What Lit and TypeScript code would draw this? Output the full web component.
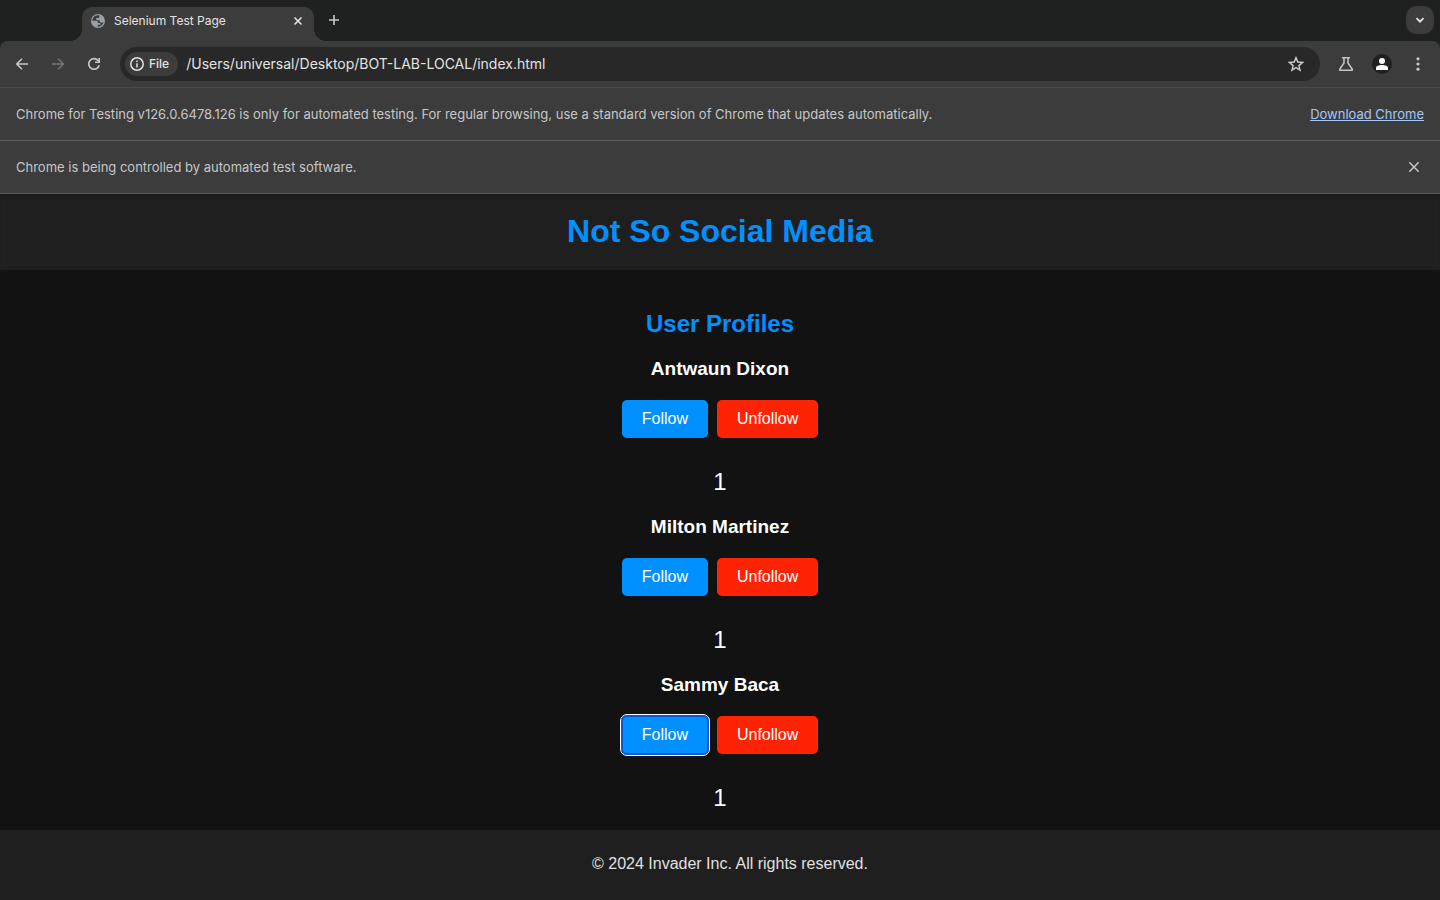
import { LitElement, html, css, svg } from "lit";
import { customElement, property, state } from "lit/decorators.js";

const icon = (size: number, box: string, body: unknown) =>
  html`<svg width=${size} height=${size} viewBox=${box} aria-hidden="true">${body}</svg>`;

const icons = {
  globe: icon(14, "0 0 14 14", svg`<circle cx="7" cy="7" r="7" fill="#9aa0a6"/><path d="M8.300 1.500C5.500.9 2.900 2.200 1.800 4.500c-.4.800-.5 1.600-.5 2.300h3.500c1.500 0 2.400.8 2.400 1.900v.3h1.200c.7 0 1.100.4 1.100 1v.8H6.700v1.900c2.900.2 5.400-1.800 5.900-4.600-.6.500-1.200.7-1.900.7-1.300 0-2-.7-2-1.700V6.300H6.200c-.7 0-1.200-.5-1.200-1.200s.5-1.200 1.200-1.200h2.100z" fill="#3c3c3c"/>`),
  close: icon(16, "0 0 16 16", svg`<path d="M4.500 4.500l7 7M11.500 4.500l-7 7" stroke="#e3e3e3" stroke-width="1.600"/>`),
  closeLarge: icon(16, "0 0 16 16", svg`<path d="M3.300 3.300l9.400 9.400M12.700 3.300l-9.400 9.400" stroke="#c7c7c7" stroke-width="1.500"/>`),
  plus: icon(16, "0 0 16 16", svg`<path d="M8 3v10M3 8h10" stroke="#c7c7c7" stroke-width="1.600"/>`),
  chevron: icon(16, "0 0 16 16", svg`<path d="M4.500 6.200L8 9.700l3.500-3.500" fill="none" stroke="#e3e3e3" stroke-width="1.800"/>`),
  back: icon(16, "0 0 16 16", svg`<path d="M14 8H3M8 2.700L2.700 8 8 13.300" fill="none" stroke="#c7c7c7" stroke-width="1.600"/>`),
  forward: icon(16, "0 0 16 16", svg`<path d="M2 8h11M8 2.700L13.300 8 8 13.300" fill="none" stroke="#757575" stroke-width="1.600"/>`),
  reload: icon(16, "0 0 16 16", svg`<path d="M13.200 9.200A5.300 5.300 0 1 1 12 4.400L13.300 5.700" fill="none" stroke="#c7c7c7" stroke-width="1.600"/><path d="M14 2v5H9V5.400h3.400V2z" fill="#c7c7c7"/>`),
  info: icon(14, "0 0 14 14", svg`<circle cx="7" cy="7" r="6.200" fill="none" stroke="#e3e3e3" stroke-width="1.500"/><path d="M7 6.200v4.200M7 3.500v1.500" stroke="#e3e3e3" stroke-width="1.500"/>`),
  star: icon(16, "0 0 16 16", svg`<path d="M8 1.800l1.800 4.300 4.700.4-3.600 3.100 1.100 4.500L8 11.700l-4 2.400 1.100-4.500L1.500 6.500l4.700-.4z" fill="none" stroke="#c7c7c7" stroke-width="1.500"/>`),
  flask: icon(16, "0 0 16 16", svg`<path d="M4 1.700h8M6 2v5L1.800 13.200q-.5 1.100.6 1.100h11.200q1.100 0 .6-1.100L10 7V2" fill="none" stroke="#c7c7c7" stroke-width="1.500"/>`),
  person: icon(20, "0 0 20 20", svg`<circle cx="10" cy="10" r="10" fill="#1f2120"/><circle cx="10" cy="7" r="3" fill="#fff"/><path d="M4 16v-2.200c0-1.900 3.200-2.800 6-2.800s6 .9 6 2.800V16z" fill="#fff"/>`),
  dots: icon(16, "0 0 16 16", svg`<g fill="#c7c7c7"><circle cx="8" cy="2.800" r="1.600"/><circle cx="8" cy="8" r="1.600"/><circle cx="8" cy="13.200" r="1.600"/></g>`),
};

@customElement("browser-chrome")
class BrowserChrome extends LitElement {
  static styles = css`
    :host { display: block; font-family: Inter, "Noto Sans", sans-serif; color: #e3e3e3; background: #1f2120; text-align: left; }
    button { display: flex; align-items: center; justify-content: center; padding: 0; border: 0; background: none; color: inherit; font: inherit; }
    svg { display: block; flex: none; }
    .tabs { display: flex; align-items: center; height: 40px; padding: 0 6px 1px 82px; }
    .tab { position: relative; display: flex; align-items: center; align-self: flex-end; gap: 9px; box-sizing: border-box; width: 232px; height: 34px; margin-bottom: -1px; padding: 0 8px 6px 9px; border-radius: 10px 10px 0 0; background: #3c3c3c; font-size: 12px; }
    .tab::before, .tab::after { content: ""; position: absolute; bottom: 0; width: 12px; height: 12px; }
    .tab::before { right: 100%; background: radial-gradient(circle at 0 0, transparent 12px, #3c3c3c 12px); }
    .tab::after { left: 100%; background: radial-gradient(circle at 100% 0, transparent 12px, #3c3c3c 12px); }
    .title { flex: 1; line-height: 14px; }
    .new { margin-left: 12px; }
    .search { width: 28px; height: 28px; margin-left: auto; border-radius: 10px; background: #3c3c3c; }
    .toolbar { display: flex; align-items: center; gap: 20px; height: 46px; padding: 0 14px; border-bottom: 1px solid #4a4a4a; border-radius: 8px 8px 0 0; background: #3c3c3c; }
    .address { display: flex; flex: 1; align-items: center; gap: 8px; height: 34px; margin: 0 -2px; padding: 0 16px 0 5px; border-radius: 17px; background: #282828; }
    .chip { gap: 5px; height: 24px; padding: 0 9px 0 5px; border-radius: 12px; background: #3c3c3c; font-size: 12px; font-weight: 500; line-height: 14px; }
    .url { flex: 1; min-width: 0; height: 18px; padding: 0 0 2px; border: 0; outline: 0; background: none; color: #e3e3e3; font: 14px/16px Inter, "Noto Sans", sans-serif; }
    .profile { margin: 0 -2px; }
    .bar { display: flex; align-items: center; justify-content: space-between; height: 52px; padding: 0 16px; border-bottom: 1px solid #5c5c5c; background: #3c3c3c; color: #c7c7c7; font-size: 13px; }
    .dismiss { margin-right: 2px; }
    a { color: #a8c7fa; }
  `;

  render() {
    return html`
      <div class="tabs">
        <div class="tab">
          ${icons.globe}<span class="title">Selenium Test Page</span>
          <button aria-label="Close tab">${icons.close}</button>
        </div>
        <button class="new" aria-label="New tab">${icons.plus}</button>
        <button class="search" aria-label="Search tabs">${icons.chevron}</button>
      </div>
      <nav class="toolbar" aria-label="Toolbar">
        <button aria-label="Back">${icons.back}</button>
        <button aria-label="Forward">${icons.forward}</button>
        <button aria-label="Reload">${icons.reload}</button>
        <div class="address">
          <button class="chip">${icons.info}<span>File</span></button>
          <input class="url" aria-label="Address" .value=${"/Users/universal/Desktop/BOT-LAB-LOCAL/index.html"}>
          <button aria-label="Bookmark this page">${icons.star}</button>
        </div>
        <button aria-label="Experiments">${icons.flask}</button>
        <button class="profile" aria-label="Profile">${icons.person}</button>
        <button aria-label="Menu">${icons.dots}</button>
      </nav>
      <div class="bar">
        <span>Chrome for Testing v126.0.6478.126 is only for automated testing. For regular browsing, use a standard version of Chrome that updates automatically.</span>
        <a href="#download">Download Chrome</a>
      </div>
      <div class="bar">
        <span>Chrome is being controlled by automated test software.</span>
        <button class="dismiss" aria-label="Dismiss">${icons.closeLarge}</button>
      </div>
    `;
  }
}

@customElement("user-profile")
class UserProfile extends LitElement {
  @property() name = "";
  @property({ type: Boolean }) active = false;
  @state() count = 1;

  static styles = css`
    :host { display: block; }
    h3 { margin: 0 0 20px; font-size: 19px; line-height: 22px; }
    .actions { display: flex; justify-content: center; gap: 9px; margin-bottom: 30px; }
    button { padding: 10px 20px; border: 0; border-radius: 5px; color: #fff; font: 16px/18px "Liberation Sans", Arial, sans-serif; cursor: pointer; }
    .follow { background: #0090ff; }
    .unfollow { background: #ff2305; }
    .focused { outline: 1px solid #fff; outline-offset: 1px; box-shadow: inset 0 0 0 1px #0b57d0, 0 0 0 1px #0b57d0; }
    .count { font-size: 24px; line-height: 28px; }
  `;

  render() {
    return html`
      <h3>${this.name}</h3>
      <div class="actions">
        <button class="follow ${this.active ? "focused" : ""}" @click=${() => this.count++}>Follow</button>
        <button class="unfollow" @click=${() => this.count--}>Unfollow</button>
      </div>
      <div class="count">${this.count}</div>
    `;
  }
}

@customElement("app-root")
class AppRoot extends LitElement {
  static styles = css`
    :host { display: flex; flex-direction: column; min-height: 100vh; background: #121212; color: #fff; font-family: "Liberation Sans", Arial, sans-serif; text-align: center; }
    header { padding: 19px 20px 21px; background: #1f1f1f; box-shadow: inset 0 3px 3px -2px #111; }
    h1 { margin: 0; color: #0090ff; font-size: 32px; line-height: 36px; }
    main { display: flex; flex: 1; flex-direction: column; gap: 20px; padding: 40px 20px 18px; }
    h2 { margin: 0; color: #0090ff; font-size: 24px; line-height: 28px; }
    footer { padding: 25px 0 27px 20px; background: #1f1f1f; color: #e0e0e0; font-size: 16px; line-height: 18px; }
  `;

  render() {
    return html`
      <browser-chrome></browser-chrome>
      <header><h1>Not So Social Media</h1></header>
      <main>
        <h2>User Profiles</h2>
        <user-profile name="Antwaun Dixon"></user-profile>
        <user-profile name="Milton Martinez"></user-profile>
        <user-profile name="Sammy Baca" active></user-profile>
      </main>
      <footer>© 2024 Invader Inc. All rights reserved.</footer>
    `;
  }
}
